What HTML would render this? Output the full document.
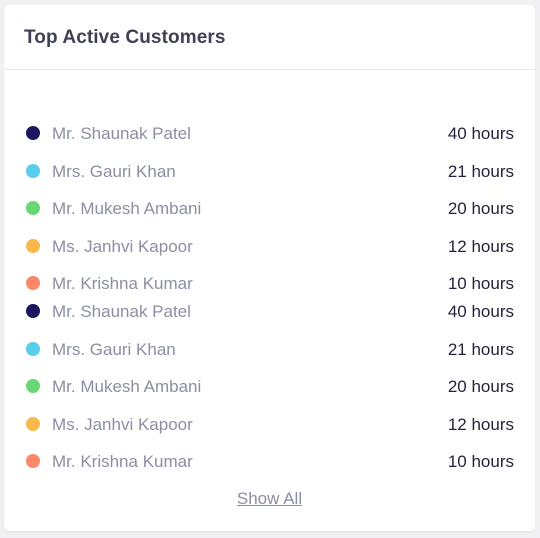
<!DOCTYPE html>
<html><head><style>
body{margin:0;width:540px;height:538px;background:#f1f1f3;font-family:"Liberation Sans",sans-serif;position:relative;overflow:hidden}
.card{position:absolute;left:4px;top:5px;width:531px;height:526px;background:#fff;border-radius:5px;box-shadow:0 1px 2px rgba(0,0,0,.06)}
.hd{position:absolute;left:0;top:0;width:100%;height:64px;border-bottom:1px solid #e8e8ec}
.t{position:absolute;left:20px;top:22px;font-size:19px;letter-spacing:0.1px;font-weight:bold;color:#3f4254}
.r{position:absolute;left:0;width:100%;height:20px}
.d{position:absolute;left:22px;top:2px;width:14px;height:14px;border-radius:50%}
.n{position:absolute;left:48px;top:0;font-size:17px;line-height:20px;color:#8b8fa1}
.h{position:absolute;right:21px;top:0;font-size:17px;line-height:20px;color:#23263a}
.s{position:absolute;left:0;width:100%;top:484px;text-align:center;font-size:17px;color:#8b8fa1;text-decoration:underline}
</style></head><body><div class="card">
<div class="hd"><div class="t">Top Active Customers</div></div>
<div class="r" style="top:119px"><div class="d" style="background:#1c1760"></div><div class="n">Mr. Shaunak Patel</div><div class="h">40 hours</div></div>
<div class="r" style="top:157px"><div class="d" style="background:#58cdec"></div><div class="n">Mrs. Gauri Khan</div><div class="h">21 hours</div></div>
<div class="r" style="top:194px"><div class="d" style="background:#69d874"></div><div class="n">Mr. Mukesh Ambani</div><div class="h">20 hours</div></div>
<div class="r" style="top:232px"><div class="d" style="background:#fab84c"></div><div class="n">Ms. Janhvi Kapoor</div><div class="h">12 hours</div></div>
<div class="r" style="top:269px"><div class="d" style="background:#fb8769"></div><div class="n">Mr. Krishna Kumar</div><div class="h">10 hours</div></div>
<div class="r" style="top:297px"><div class="d" style="background:#1c1760"></div><div class="n">Mr. Shaunak Patel</div><div class="h">40 hours</div></div>
<div class="r" style="top:335px"><div class="d" style="background:#58cdec"></div><div class="n">Mrs. Gauri Khan</div><div class="h">21 hours</div></div>
<div class="r" style="top:372px"><div class="d" style="background:#69d874"></div><div class="n">Mr. Mukesh Ambani</div><div class="h">20 hours</div></div>
<div class="r" style="top:410px"><div class="d" style="background:#fab84c"></div><div class="n">Ms. Janhvi Kapoor</div><div class="h">12 hours</div></div>
<div class="r" style="top:447px"><div class="d" style="background:#fb8769"></div><div class="n">Mr. Krishna Kumar</div><div class="h">10 hours</div></div>
<div class="s">Show All</div>
</div></body></html>
